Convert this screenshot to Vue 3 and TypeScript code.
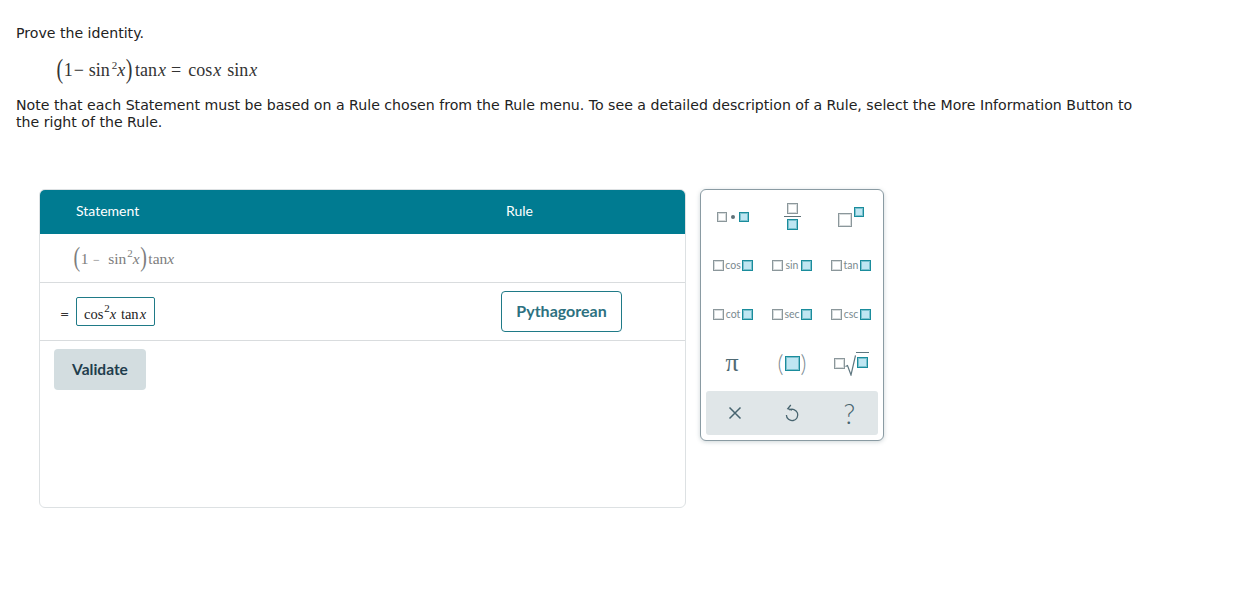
<script setup lang="ts">
const funcs: string[][] = [
  ['cos', 'sin', 'tan'],
  ['cot', 'sec', 'csc'],
]
</script>

<template>
  <div class="page">
    <p class="prompt">Prove the identity.</p>
    <div class="identity">
      <span class="paren">(</span>1<span class="minus">−</span>sin<sup>2</sup><i>x</i><span class="paren">)</span>
      <span class="fn tan">tan<i>x</i></span>
      <span class="eq">=</span>
      <span class="fn">cos<i>x</i></span>
      <span class="fn sin">sin<i>x</i></span>
    </div>
    <p class="note">
      Note that each Statement must be based on a Rule chosen from the Rule menu. To see a detailed description of a Rule, select the More Information Button to the right of the Rule.
    </p>

    <div class="workspace">
      <section class="proof">
        <header class="proof-head">
          <span class="col-statement">Statement</span>
          <span class="col-rule">Rule</span>
        </header>
        <div class="row row-given">
          <span class="given">
            <span class="paren">(</span>1<span class="minus wide">−</span>sin<sup>2</sup><i>x</i><span class="paren">)</span><span class="fn">tan<i>x</i></span>
          </span>
        </div>
        <div class="row row-step">
          <span class="equals">=</span>
          <span class="answer">cos<sup>2</sup><i>x</i> <span class="fn">tan<i>x</i></span></span>
          <button class="rule-btn"><span>Pythagorean</span></button>
        </div>
        <div class="actions">
          <button class="validate"><span>Validate</span></button>
        </div>
      </section>

      <aside class="palette">
        <div class="keys">
          <div class="key product">
            <span class="box"></span><span class="dot"></span><span class="box on"></span>
          </div>
          <div class="key frac">
            <span class="box"></span><span class="bar"></span><span class="box on"></span>
          </div>
          <div class="key power">
            <span class="box big"></span><span class="box on raised"></span>
          </div>

          <template v-for="(row, r) in funcs" :key="r">
            <div v-for="fn in row" :key="fn" class="key trig">
              <span class="box"></span><span class="trig-name">{{ fn }}</span><span class="box on"></span>
            </div>
          </template>

          <div class="key pi">π</div>
          <div class="key parens">
            <span class="round">(</span><span class="box on large"></span><span class="round">)</span>
          </div>
          <div class="key root">
            <span class="box"></span>
            <svg width="11" height="24" viewBox="0 0 11 24" class="radical">
              <path d="M0.5 14.5 L2.5 13.5 L6 23 L10.5 3.5" fill="none" stroke="#5f7780" stroke-width="1.2" />
            </svg>
            <span class="radicand"><span class="box on"></span></span>
          </div>
        </div>

        <div class="tools">
          <svg width="16" height="16" viewBox="0 0 16 16">
            <path d="M2.5 2.5 L13.5 13.5 M13.5 2.5 L2.5 13.5" stroke="#47646f" stroke-width="1.5" fill="none" />
          </svg>
          <svg width="16" height="18" viewBox="0 0 16 18">
            <path d="M6.8 1 L3.8 4.7 L8 6.2 M5.2 6 A5.7 5.7 0 1 1 2.4 11" stroke="#47646f" stroke-width="1.3" fill="none" />
          </svg>
          <span class="help">?</span>
        </div>
      </aside>
    </div>
  </div>
</template>

<style scoped>
.page {
  padding: 25px 16px 0;
  font-family: 'DejaVu Sans', Verdana, sans-serif;
  font-size: 14.13px;
  line-height: 17px;
  color: #222;
}

.prompt,
.note {
  margin: 0;
}

.note {
  width: 1125px;
}

.identity {
  height: 30px;
  margin: 13px 0 12px 40px;
  font-family: 'Liberation Serif', 'Times New Roman', serif;
  font-size: 18px;
  line-height: 30px;
  color: #333;
  white-space: nowrap;
}

.identity .fn i {
  margin-left: 1px;
}

.identity .tan {
  margin-left: 2px;
}

.identity .sin {
  margin-left: 6px;
}

.identity .eq {
  margin: 0 7px 0 5px;
}

.paren {
  display: inline-block;
  font-size: 20px;
  line-height: 20px;
  transform: scaleY(1.35);
  margin: 0 0.5px;
}

.minus {
  margin: 0 5px 0 1px;
}

.minus.wide {
  margin: 0 8.5px 0 4.5px;
  font-size: 12px;
}

sup {
  font-size: 11px;
  line-height: 0;
  vertical-align: 7px;
  margin-left: 2px;
}

.given sup,
.answer sup {
  margin-left: 1px;
}

i {
  font-style: italic;
}

.workspace {
  display: flex;
  align-items: flex-start;
  gap: 14px;
  margin: 58px 0 0 23px;
}

.proof {
  width: 647px;
  height: 319px;
  box-sizing: border-box;
  border: 1px solid #dde1e3;
  border-radius: 6px;
  overflow: hidden;
  font-family: Lato, 'Open Sans', sans-serif;
}

.proof-head {
  display: flex;
  align-items: center;
  height: 43px;
  margin: -1px -1px 0;
  padding-bottom: 2px;
  background: #007b91;
  color: #fff;
  font-size: 14px;
}

.col-statement {
  width: 430px;
  padding-left: 37px;
}

.row {
  display: flex;
  align-items: center;
  border-bottom: 1px solid #d9dcde;
}

.row-given {
  height: 48px;
  padding-left: 33px;
}

.given {
  font-family: 'Liberation Serif', 'Times New Roman', serif;
  font-size: 15.5px;
  color: #7d7d7d;
  white-space: nowrap;
}

.given .fn {
  margin-left: 1px;
}

.row-step {
  height: 57px;
  padding-left: 20px;
}

.equals {
  width: 16px;
  font-family: 'DejaVu Sans', sans-serif;
  font-size: 11px;
  color: #333;
  position: relative;
  top: 3px;
}

.answer {
  display: inline-block;
  box-sizing: border-box;
  width: 79px;
  height: 29px;
  padding: 5px 0 0 7px;
  border: 1px solid #1f7a87;
  border-radius: 2px;
  font-family: 'Liberation Serif', 'Times New Roman', serif;
  font-size: 14.5px;
  line-height: 22px;
  color: #222;
  white-space: nowrap;
}

.answer .fn {
  margin-left: 1px;
}

.answer .fn i {
  margin-left: 1px;
}

.rule-btn {
  width: 121px;
  height: 41px;
  margin-left: 346px;
  padding: 0 0 2px;
  background: #fff;
  border: 1px solid #1f7a87;
  border-radius: 4px;
  font-family: Lato, sans-serif;
  font-size: 16px;
  font-weight: 700;
  color: #2d7180;
}

.actions {
  padding: 8px 14px;
}

.validate {
  width: 92px;
  height: 41px;
  padding: 0 0 2px;
  border: none;
  border-radius: 4px;
  background: #d3dde0;
  font-family: Lato, sans-serif;
  font-size: 15.5px;
  font-weight: 700;
  color: #1f3d4d;
}

.palette {
  width: 184px;
  height: 252px;
  box-sizing: border-box;
  padding: 0 5px;
  border: 1px solid #8a9ba3;
  border-radius: 6px;
  background: #fff;
  box-shadow: 0 1px 4px rgba(60, 90, 100, 0.25);
  font-family: Lato, sans-serif;
}

.keys {
  display: grid;
  grid-template-columns: 54px 64px 54px;
  grid-auto-rows: 49px;
  padding-top: 2px;
  height: 201px;
  box-sizing: border-box;
}

.key {
  display: flex;
  align-items: center;
  justify-content: center;
}

.box {
  display: inline-block;
  flex: none;
  box-sizing: border-box;
  width: 10px;
  height: 10px;
  border: 1px solid #8b979b;
  box-shadow: inset 0 0 0 1px rgba(139, 151, 155, 0.35);
  background: #fff;
}

.box.on {
  border-color: #1a8c9c;
  box-shadow: inset 0 0 0 1px rgba(26, 140, 156, 0.4);
  background: #bfe6f2;
}

.dot {
  width: 4px;
  height: 4px;
  margin: 0 4px;
  border-radius: 50%;
  background: #5f7178;
}

.frac {
  flex-direction: column;
  gap: 2px;
}

.frac .box {
  width: 11px;
  height: 11px;
}

.bar {
  width: 17px;
  height: 1px;
  background: #5f7178;
}

.power {
  align-items: flex-start;
  padding-top: 15px;
  box-sizing: border-box;
}

.box.big {
  width: 14px;
  height: 14px;
  margin-top: 6px;
}

.box.raised {
  margin: 0 0 0 2px;
}

.trig {
  gap: 1px;
}

.trig .box {
  width: 11px;
  height: 11px;
}

.trig-name {
  width: 16px;
  text-align: center;
  font-size: 10.5px;
  color: #7a8a90;
}

.pi {
  font-family: 'Liberation Serif', serif;
  font-size: 26px;
  color: #4f6a74;
  padding-right: 2px;
  padding-bottom: 2px;
}

.parens {
  gap: 1px;
}

.round {
  font-size: 23px;
  font-weight: 300;
  color: #7d8d93;
}

.box.large {
  width: 15px;
  height: 15px;
}

.root .box {
  width: 11px;
  height: 11px;
}

.radicand {
  display: flex;
  align-items: center;
  justify-content: center;
  width: 13px;
  height: 19px;
  margin-top: -3px;
  border-top: 1px solid #5f7780;
}

.tools {
  display: grid;
  grid-template-columns: repeat(3, 1fr);
  align-items: center;
  justify-items: center;
  height: 44px;
  border-radius: 3px;
  background: #e0e6e8;
}

.help {
  font-size: 27px;
  font-weight: 300;
  color: #47646f;
}
</style>
